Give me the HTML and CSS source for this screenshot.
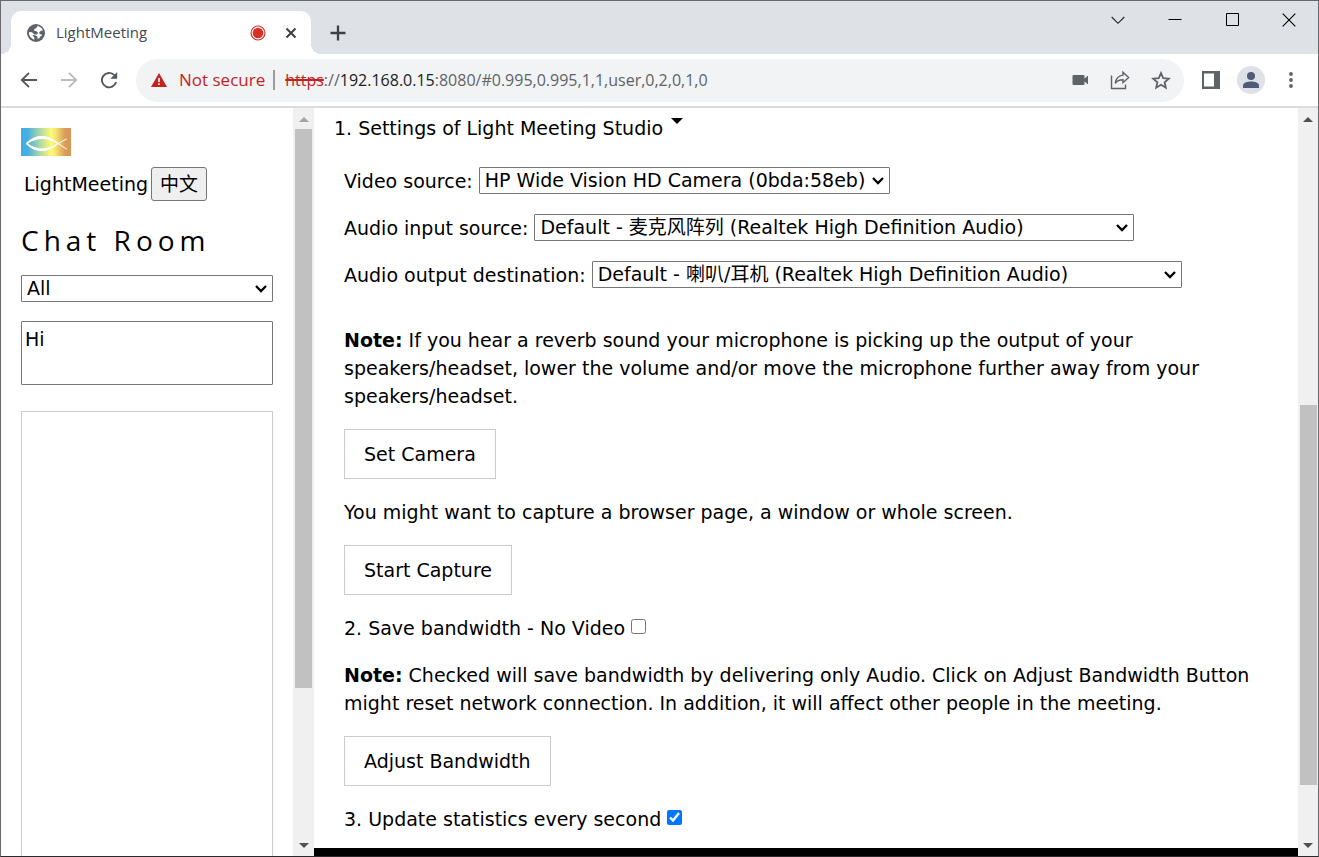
FILE: index.html
```html
<!DOCTYPE html>
<html lang="en">
<head>
<meta charset="utf-8">
<title>LightMeeting</title>
<link rel="stylesheet" href="styles.css">
</head>
<body>
<div class="window">
  <header class="tabstrip">
    <div class="tab">
      <svg class="tab-icon" width="18" height="18" viewBox="0 0 18 18" aria-hidden="true"><circle cx="9" cy="9" r="9" fill="#5f6368"/><path d="M10.400 2c-.4 1.700-1.200 2.400-2.800 2.800l-.6 1.900 2.600.5 1.400 1.500-1 1.700H7.300L5 8.300 2 8c-.3 3.900 2.200 6.700 5.300 7.700l-.1-2.400-1.500-1.500.3-.8 2.900.5 1.700 1.200-.3 1.800 1.900-.1 1-1.800 1.600-.8-.1-1.200-2-.6-.5-1.600 1.500-1.600 2.200-.3C15.100 4.100 13 2.500 10.400 2z" fill="#fff"/></svg>
      <span class="tab-title">LightMeeting</span>
      <svg class="tab-rec" width="16" height="16" viewBox="0 0 16 16" aria-hidden="true"><circle cx="8" cy="8" r="7" fill="#fff" stroke="#d93025" stroke-width="1.200"/><circle cx="8" cy="8" r="5.300" fill="#d93025"/></svg>
      <button class="icon-btn" aria-label="Close tab"><svg width="12" height="12" viewBox="0 0 12 12"><path d="M1.500 1.500l9 9M10.500 1.500l-9 9" stroke="#3c4043" stroke-width="2"/></svg></button>
    </div>
    <button class="icon-btn new-tab" aria-label="New tab"><svg width="16" height="16" viewBox="0 0 16 16"><path d="M8 .5v15M.5 8h15" stroke="#3c4043" stroke-width="2.300"/></svg></button>
    <div class="window-controls">
      <button class="icon-btn" aria-label="Search tabs"><svg width="14" height="14" viewBox="0 0 14 14"><path d="M.7 4L7 10.300 13.300 4" fill="none" stroke="#222" stroke-width="1.100"/></svg></button>
      <button class="icon-btn" aria-label="Minimize"><svg width="14" height="14" viewBox="0 0 14 14"><path d="M.5 6.500h13" stroke="#000"/></svg></button>
      <button class="icon-btn" aria-label="Maximize"><svg width="14" height="14" viewBox="0 0 14 14"><path d="M1.500.5h12v12h-12z" fill="none" stroke="#000"/></svg></button>
      <button class="icon-btn" aria-label="Close"><svg width="14" height="14" viewBox="0 0 14 14"><path d="M.7.7l12.600 12.600M13.300.7L.7 13.300" stroke="#000" stroke-width="1.100"/></svg></button>
    </div>
  </header>

  <nav class="toolbar" aria-label="Browser toolbar">
    <div class="nav-buttons">
      <button class="icon-btn" aria-label="Back"><svg width="18" height="18" viewBox="0 0 18 18"><path d="M17 9H2M9 1.800L1.800 9 9 16.200" fill="none" stroke="#54585d" stroke-width="1.900"/></svg></button>
      <button class="icon-btn" aria-label="Forward"><svg width="18" height="18" viewBox="0 0 18 18"><path d="M1 9h15M9 1.800L16.200 9 9 16.200" fill="none" stroke="#babcbe" stroke-width="1.900"/></svg></button>
      <button class="icon-btn" aria-label="Reload"><svg width="18" height="18" viewBox="0 0 18 18"><path d="M16.100 11A7.200 7.200 0 1 1 14.400 4.200" fill="none" stroke="#54585d" stroke-width="1.900"/><path d="M17.200 1v6.800h-6.800z" fill="#54585d"/></svg></button>
    </div>
    <div class="address">
      <svg class="warn" width="16" height="14" viewBox="0 0 16 14" aria-hidden="true"><path d="M8 0l8 14H0z" fill="#c5221f"/><path d="M7.200 5h1.600v4H7.200zM7.200 10.300h1.600v1.600H7.200z" fill="#fff"/></svg>
      <span class="insecure">Not secure</span>
      <span class="divider"></span>
      <div class="url" role="textbox" aria-label="Address" contenteditable="true" spellcheck="false"><span class="scheme">https</span>://<span class="host">192.168.0.15</span>:8080/#0.995,0.995,1,1,user,0,2,0,1,0</div>
      <button class="icon-btn" aria-label="Camera in use"><svg width="18" height="18" viewBox="0 0 18 18"><path d="M2.500 4h10q1 0 1 1v2.600L17 4.500v9l-3.500-3V13q0 1-1 1h-10q-1 0-1-1V5q0-1 1-1z" fill="#5f6368"/></svg></button>
      <button class="icon-btn" aria-label="Share"><svg width="20" height="20" viewBox="0 0 20 20"><path d="M1.500 5.500v13h14v-4" fill="none" stroke="#5f6368" stroke-width="1.400"/><path d="M13 2.200l5.600 5.300-5.600 5.200V9.700c-3.700 0-6 1.100-7.700 3.600.5-4.500 3.200-7.600 7.700-8.200z" fill="none" stroke="#5f6368" stroke-width="1.400"/></svg></button>
      <button class="icon-btn" aria-label="Bookmark"><svg width="20" height="20" viewBox="0 0 20 20"><path d="M10 3l2.200 5.100 5.600.5-4.200 3.700 1.200 5.400L10 14.800l-4.800 2.900 1.200-5.400-4.200-3.700 5.600-.5z" fill="none" stroke="#5f6368" stroke-width="1.800"/></svg></button>
    </div>
    <div class="tools">
      <button class="icon-btn" aria-label="Side panel"><svg width="18" height="18" viewBox="0 0 18 18"><path d="M0 0h18v18H0z" fill="#5f6368"/><path d="M2 2.500h10v13H2z" fill="#fff"/></svg></button>
      <button class="icon-btn avatar" aria-label="Profile"><svg width="16" height="16" viewBox="0 0 16 16"><circle cx="8" cy="4" r="4" fill="#4f5b76"/><path d="M0 16v-2.500c0-2.700 4-4 8-4s8 1.300 8 4V16z" fill="#4f5b76"/></svg></button>
      <button class="icon-btn" aria-label="Menu"><svg width="4" height="16" viewBox="0 0 4 16"><g fill="#5f6368"><circle cx="2" cy="2" r="1.900"/><circle cx="2" cy="8" r="1.900"/><circle cx="2" cy="14" r="1.900"/></g></svg></button>
    </div>
  </nav>

  <div class="page">
    <aside class="sidebar">
      <div class="sidebar-body">
        <svg class="logo" width="50" height="28" viewBox="0 0 50 28" role="img" aria-label="Light Meeting logo"><defs><linearGradient id="sky"><stop offset="0" stop-color="#3daee9"/><stop offset=".14" stop-color="#49afe0"/><stop offset=".4" stop-color="#b6dba0"/><stop offset=".6" stop-color="#fff873"/><stop offset=".68" stop-color="#f8e96f"/><stop offset=".88" stop-color="#d99b5c"/><stop offset="1" stop-color="#d79658"/></linearGradient></defs><path d="M0 0h50v28H0z" fill="url(#sky)"/><path d="M5 15.500C15 6 26 6 37 15.500L45.500 21M5 15.500C15 25 26 25 37 15.500L45.500 11" fill="none" stroke="#fff" stroke-width="1"/><path fill-rule="evenodd" d="M5 15.500C15 5.500 26 5.500 38 15.500 26 25.500 15 25.500 5 15.500zM7 15.500C16 22 26 22 36 15.500 26 9.500 16 9.500 7 15.500z" fill="#fff"/></svg>
        <div class="brand"><span>LightMeeting</span><button class="lang-btn" lang="zh">中文</button></div>
        <h1 class="chat-title">Chat Room</h1>
        <select class="select recipient" aria-label="Recipient"><option>All</option></select>
        <textarea class="message" aria-label="Message">Hi</textarea>
        <div class="messages" role="log" aria-label="Messages"></div>
      </div>
      <div class="scrollbar" aria-hidden="true">
        <span class="arrow arrow-up arrow-off"></span>
        <div class="track track-side"><span class="thumb"></span></div>
        <span class="arrow arrow-down"></span>
      </div>
    </aside>

    <main class="main">
      <div class="main-body">
        <section class="settings">
          <h2 class="settings-title">1. Settings of Light Meeting Studio <span class="caret"></span></h2>
          <div class="row"><label for="video">Video source:</label><select id="video" class="select video"><option>HP Wide Vision HD Camera (0bda:58eb)</option></select></div>
          <div class="row"><label for="audio-in">Audio input source:</label><select id="audio-in" class="select audio-in"><option>Default - 麦克风阵列 (Realtek High Definition Audio)</option></select></div>
          <div class="row row-last"><label for="audio-out">Audio output destination:</label><select id="audio-out" class="select audio-out"><option>Default - 喇叭/耳机 (Realtek High Definition Audio)</option></select></div>
          <p><strong>Note:</strong> If you hear a reverb sound your microphone is picking up the output of your speakers/headset, lower the volume and/or move the microphone further away from your speakers/headset.</p>
          <button class="action">Set Camera</button>
          <p>You might want to capture a browser page, a window or whole screen.</p>
          <button class="action">Start Capture</button>
          <div class="row"><label for="novideo">2. Save bandwidth - No Video</label><input class="check" type="checkbox" id="novideo"></div>
          <p><strong>Note:</strong> Checked will save bandwidth by delivering only Audio. Click on Adjust Bandwidth Button might reset network connection. In addition, it will affect other people in the meeting.</p>
          <button class="action">Adjust Bandwidth</button>
          <div class="row"><label for="stats">3. Update statistics every second</label><input class="check" type="checkbox" id="stats" checked></div>
        </section>
        <div class="stage"></div>
      </div>
      <div class="scrollbar" aria-hidden="true">
        <span class="arrow arrow-up"></span>
        <div class="track track-main"><span class="thumb"></span></div>
        <span class="arrow arrow-down"></span>
      </div>
    </main>
  </div>
</div>
</body>
</html>
```
FILE: styles.css
```css
* { box-sizing: border-box; }

body {
  margin: 0;
  background: #fff;
  color: #000;
  font: 19px/28px Verdana, "DejaVu Sans", "Noto Sans CJK SC", sans-serif;
}

h1, h2, p { margin: 0; font-weight: 400; }
button, select, textarea { font: inherit; color: inherit; }

.window {
  display: flex;
  flex-direction: column;
  height: 100vh;
  border: 1px solid #69696b;
  border-bottom-color: #2b292b;
  overflow: hidden;
}

.icon-btn {
  display: flex;
  align-items: center;
  justify-content: center;
  flex: none;
  padding: 0;
  border: 0;
  background: none;
}

/* Tab strip */
.tabstrip {
  display: flex;
  flex: none;
  height: 53px;
  padding-left: 10px;
  background: #dee1e6;
}

.tab {
  position: relative;
  display: flex;
  align-items: center;
  width: 300px;
  height: 43px;
  margin-top: 10px;
  padding: 0 14px 0 16px;
  border-radius: 10px 10px 0 0;
  background: #fff;
}

.tab::before,
.tab::after {
  content: "";
  position: absolute;
  bottom: 0;
  width: 10px;
  height: 10px;
}

.tab::before { right: 100%; background: radial-gradient(circle at 0 0, #dee1e6 10px, #fff 10px); }
.tab::after { left: 100%; background: radial-gradient(circle at 100% 0, #dee1e6 10px, #fff 10px); }

.tab-title {
  flex: 1;
  margin-left: 11px;
  padding-bottom: 2px;
  color: #45494d;
  font: 15px/20px "Segoe UI", "Open Sans", sans-serif;
}

.tab-rec { margin-right: 19px; }
.new-tab { width: 32px; margin: 10px 0 0 11px; }

.window-controls {
  display: flex;
  gap: 43px;
  height: 37px;
  margin-left: auto;
  padding-right: 22px;
}

/* Toolbar */
.toolbar {
  display: flex;
  align-items: center;
  flex: none;
  height: 54px;
  padding-left: 19px;
  border-bottom: 2px solid #dadcdd;
}

.nav-buttons { display: flex; gap: 22px; }

.address {
  display: flex;
  align-items: center;
  flex: 1;
  height: 43px;
  margin-left: 18px;
  padding: 0 13px 0 15px;
  border-radius: 22px;
  background: #f1f3f4;
  color: #5f6368;
  font: 16px/24px "Segoe UI", "Open Sans", sans-serif;
  gap: 21px;
}

.insecure { margin-left: -9px; color: #c5221f; font-size: 17px; }
.divider { width: 2px; height: 20px; margin: 0 -11px 0 -13px; background: #9a9da0; }
.url { flex: 1; outline: 0; white-space: nowrap; overflow: hidden; }
.scheme { color: #c5221f; text-decoration: line-through 2px; }
.host { color: #202124; }

.tools {
  display: flex;
  align-items: center;
  gap: 17px;
  padding: 0 25px 0 18px;
}

.avatar { width: 28px; height: 28px; border-radius: 50%; background: #dee1e6; }
.tools .icon-btn:last-child { margin-left: 7px; }

/* Page */
.page { display: flex; flex: 1; min-height: 0; }
.sidebar { display: flex; flex: none; width: 313px; }

.sidebar-body {
  display: flex;
  flex-direction: column;
  flex: 1;
  min-width: 0;
  padding: 20px 20px 0;
}

.logo { flex: none; }

.brand {
  display: flex;
  align-items: center;
  gap: 3px;
  margin-top: 11px;
  padding-left: 3px;
}

.lang-btn {
  height: 34px;
  padding: 0 8px;
  border: 1px solid #767676;
  border-radius: 3px;
  background: #efefef;
}

.chat-title {
  margin: 19px 0 15px;
  font: 400 28px/40px "Segoe UI", "Open Sans", sans-serif;
  letter-spacing: 5px;
}

.select {
  height: 27px;
  padding: 0 22px 0 5px;
  border: 1px solid #767676;
  border-radius: 1px;
  appearance: none;
  background: #fff url("data:image/svg+xml,%3Csvg xmlns='http://www.w3.org/2000/svg' width='12' height='8'%3E%3Cpath d='M1 1l5 5 5-5' fill='none' stroke='%23000' stroke-width='2.300'/%3E%3C/svg%3E") no-repeat right 5px center;
  line-height: 25px;
}

.recipient { flex: none; width: 100%; }

.message {
  flex: none;
  width: 100%;
  height: 64px;
  margin-top: 19px;
  padding: 3px;
  border: 1px solid #767676;
  border-radius: 1px;
  resize: none;
  outline: 0;
}

.messages {
  flex: 1;
  margin-top: 26px;
  border: 1px solid #ccc;
  border-bottom: 0;
}

.main { display: flex; flex: 1; min-width: 0; }

.main-body {
  display: flex;
  flex-direction: column;
  flex: 1;
  min-width: 0;
}

.settings {
  display: flex;
  flex-direction: column;
  align-items: flex-start;
  gap: 19px;
  padding: 6px 30px 15px;
}

.settings-title {
  margin: 0 0 6px -10px;
  font-size: inherit;
}

.caret {
  display: inline-block;
  margin-left: 2px;
  border: 6px solid transparent;
  border-top-color: #000;
  border-bottom: 0;
  vertical-align: 11px;
}

.row { display: flex; align-items: center; gap: 6px; height: 28px; }
.row .select { align-self: flex-start; }
.row-last { margin-bottom: 18px; }
.video { width: 411px; }
.audio-in { width: 600px; }
.audio-out { width: 590px; }

.action {
  height: 50px;
  padding: 0 19px;
  border: 1px solid #ccc;
  background: #fff;
}

.check { width: 15px; height: 15px; margin: 0 0 3px; }
.stage { flex: 1; background: #000; }

/* Scrollbars */
.scrollbar {
  display: flex;
  flex-direction: column;
  flex: none;
  width: 20px;
  background: #f0f0f0;
}

.sidebar .scrollbar { width: 21px; }

.arrow {
  display: flex;
  align-items: center;
  justify-content: center;
  height: 21px;
}

.arrow::before {
  content: "";
  border: 5px solid transparent;
}

.arrow-up { padding-top: 2px; }
.arrow-up::before { border-bottom-color: #505050; border-top: 0; }
.arrow-down::before { border-top-color: #505050; border-bottom: 0; }
.arrow-off::before { border-bottom-color: #a3a3a3; }

.track { display: grid; flex: 1; }
.track-side { grid-template-rows: 0fr 559fr 147fr; }
.track-main { grid-template-rows: 276fr 380fr 50fr; }
.thumb { grid-row: 2; margin: 0 2px; background: #c1c1c1; }
.track-main .thumb { margin-right: 1px; }
```
